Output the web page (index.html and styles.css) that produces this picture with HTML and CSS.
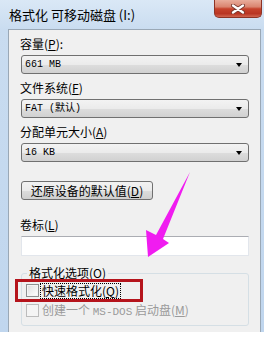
FILE: index.html
```html
<!DOCTYPE html>
<html lang="zh-CN">
<head>
<meta charset="utf-8">
<title>格式化 可移动磁盘 (I:)</title>
<link rel="stylesheet" href="styles.css">
</head>
<body>
<div class="window">
  <div class="titlebar">
    <span class="title">格式化 可移动磁盘 (I:)</span>
    <div class="close">
      <svg width="14" height="10" viewBox="0 0 14 10">
        <path d="M2 1.5 L12 8.5 M12 1.5 L2 8.5" stroke="#7a3a30" stroke-width="4" stroke-linecap="round"/>
        <path d="M2 1.5 L12 8.5 M12 1.5 L2 8.5" stroke="#ffffff" stroke-width="2.2" stroke-linecap="round"/>
      </svg>
    </div>
  </div>
  <div class="panel">
    <div class="lbl first">容量(<u>P</u>):</div>
    <div class="combo"><span class="val">661 MB</span><i class="caret"></i></div>
    <div class="lbl">文件系统(<u>F</u>)</div>
    <div class="combo"><span class="val">FAT (默认)</span><i class="caret"></i></div>
    <div class="lbl">分配单元大小(<u>A</u>)</div>
    <div class="combo"><span class="val">16 KB</span><i class="caret"></i></div>
    <div class="btn">还原设备的默认值(<u>D</u>)</div>
    <div class="lbl vol">卷标(<u>L</u>)</div>
    <div class="textbox"></div>
    <fieldset class="group">
      <legend>格式化选项(<u>O</u>)</legend>
      <div class="row">
        <span class="check"></span>
        <span class="focus">快速格式化(<u>Q</u>)</span>
      </div>
      <div class="row disabled">
        <span class="check"></span>
        <span class="plain">创建一个 <span class="mono">MS-DOS</span> 启动盘(<u>M</u>)</span>
      </div>
    </fieldset>
  </div>
  <div class="redbox"></div>
  <svg class="arrow" width="275" height="342" viewBox="0 0 275 342">
    <polygon points="190,172 163,239 169,243 148,257 146,230 156,235" fill="#f01cf0"/>
  </svg>
</div>
</body>
</html>
```
FILE: styles.css
```css
html, body {
  margin: 0;
  padding: 0;
  background: #ffffff;
}
body {
  font-family: "Noto Sans CJK SC", "Noto Sans", sans-serif;
  font-size: 12px;
  color: #000;
}
.window {
  position: relative;
  width: 264px;
  height: 332px;
  box-sizing: border-box;
  padding: 0 3px 0 8px;
  display: flex;
  flex-direction: column;
  background: linear-gradient(180deg, #dae8f6 0px, #c9dcf0 30px, #c0d6ee 100%);
}
.titlebar {
  height: 29px;
  display: flex;
  align-items: flex-start;
}
.title {
  margin-left: 1px;
  margin-top: 6px;
  line-height: 17px;
  font-size: 13px;
}
.close {
  margin-left: auto;
  margin-right: -1px;
  width: 48px;
  height: 18px;
  box-sizing: border-box;
  border: 1px solid #8d3325;
  border-top: none;
  border-radius: 0 0 5px 5px;
  background: linear-gradient(180deg, #e9ad9c 0%, #da8570 40%, #c6432c 52%, #b93523 80%, #d06650 100%);
  display: flex;
  align-items: center;
  justify-content: center;
}
.close svg { display: block; }
.panel {
  flex: 1;
  background: #f0f0f0;
  border: 1px solid #9aa8b6;
  border-bottom: none;
  padding: 7px 11px 0 12px;
  display: flex;
  flex-direction: column;
}
.lbl {
  line-height: 14px;
  height: 14px;
  margin-top: 7px;
  margin-left: -1px;
}
.lbl.first { margin-top: 0; }
.lbl.vol { margin-top: 18px; }
u { text-decoration: underline; }
.combo {
  margin-top: 4px;
  height: 19px;
  box-sizing: border-box;
  border: 1px solid #707070;
  border-radius: 3px;
  background: linear-gradient(180deg, #f3f3f3 0%, #ebebeb 50%, #dddddd 51%, #d1d1d1 100%);
  display: flex;
  align-items: center;
  padding: 0 6px 0 3px;
}
.val {
  font-family: "Liberation Mono", "Noto Sans CJK SC", monospace;
  font-size: 10px;
  line-height: 12px;
  flex: 1;
}
.caret {
  width: 0;
  height: 0;
  border-left: 3.5px solid transparent;
  border-right: 3.5px solid transparent;
  border-top: 4px solid #000;
}
.btn {
  margin-top: 19px;
  width: 132px;
  height: 19px;
  box-sizing: border-box;
  border: 1px solid #707070;
  border-radius: 3px;
  background: linear-gradient(180deg, #f2f2f2 0%, #ebebeb 50%, #dddddd 51%, #cfcfcf 100%);
  text-align: center;
  line-height: 17px;
  font-size: 12px;
}
.textbox {
  margin-top: 4px;
  height: 20px;
  box-sizing: border-box;
  background: #ffffff;
  border: 1px solid #e2e6ec;
  border-top-color: #abadb3;
}
.group {
  margin: 10px 0 0 0;
  padding: 3px 0 7px 4px;
  border: 1px solid #d5dfe5;
  border-radius: 3px;
  min-width: 0;
}
.group legend {
  margin-left: 1px;
  padding: 0 2px;
  line-height: 14px;
  font-size: 12px;
}
.row {
  display: flex;
  align-items: center;
  height: 15px;
}
.row + .row { margin-top: 5px; }
.check {
  width: 13px;
  height: 13px;
  box-sizing: border-box;
  border: 1px solid #8e8f8f;
  background: linear-gradient(135deg, #dcdcdc 0%, #f2f2f2 60%, #ffffff 100%);
  box-shadow: inset 0 0 0 1px #f4f4f4;
  margin-right: 2px;
}
.disabled .check {
  border-color: #bcbcbc;
  background: #f4f4f4;
}
.focus {
  outline: 1px dotted #000;
  outline-offset: 0;
  padding: 0 1px;
  line-height: 14px;
}
.plain {
  padding: 0 1px;
  line-height: 14px;
}
.disabled { color: #9a9a9a; }
.mono {
  font-family: "Liberation Mono", monospace;
  font-size: 11px;
}
.redbox {
  position: absolute;
  left: 15px;
  top: 279px;
  width: 128px;
  height: 23px;
  box-sizing: border-box;
  border: 3px solid #b5141c;
}
.arrow {
  position: absolute;
  left: 0;
  top: 0;
  pointer-events: none;
}
```
